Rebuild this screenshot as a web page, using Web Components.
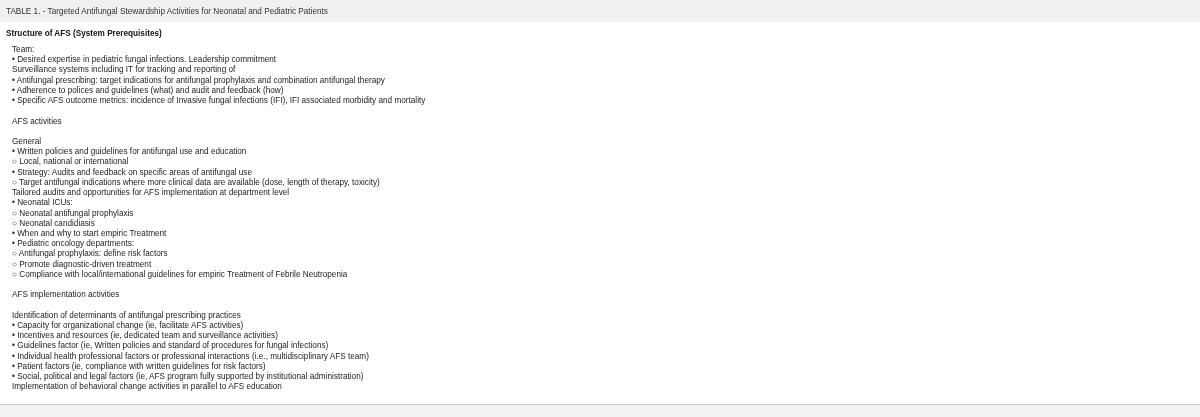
<!DOCTYPE html>
<html>
<head>
<meta charset="utf-8">
<title>Table 1</title>
<style>
  html, body { margin: 0; padding: 0; background: #fff; }
  body { font-family: "Liberation Sans", Arial, sans-serif; }
</style>
</head>
<body>
<table-page>
  <span slot="caption">TABLE 1. - Targeted Antifungal Stewardship Activities for Neonatal and Pediatric Patients</span>
  <span slot="heading">Structure of AFS (System Prerequisites)</span>
  <t-line>Team:</t-line>
  <t-line>• Desired expertise in pediatric fungal infections. Leadership commitment</t-line>
  <t-line>Surveillance systems including IT for tracking and reporting of</t-line>
  <t-line>• Antifungal prescribing: target indications for antifungal prophylaxis and combination antifungal therapy</t-line>
  <t-line>• Adherence to polices and guidelines (what) and audit and feedback (how)</t-line>
  <t-line>• Specific AFS outcome metrics: incidence of Invasive fungal infections (IFI), IFI associated morbidity and mortality</t-line>
  <t-line></t-line>
  <t-line>AFS activities</t-line>
  <t-line></t-line>
  <t-line>General</t-line>
  <t-line>• Written policies and guidelines for antifungal use and education</t-line>
  <t-line>○ Local, national or international</t-line>
  <t-line>• Strategy: Audits and feedback on specific areas of antifungal use</t-line>
  <t-line>○ Target antifungal indications where more clinical data are available (dose, length of therapy, toxicity)</t-line>
  <t-line>Tailored audits and opportunities for AFS implementation at department level</t-line>
  <t-line>• Neonatal ICUs:</t-line>
  <t-line>○ Neonatal antifungal prophylaxis</t-line>
  <t-line>○ Neonatal candidiasis</t-line>
  <t-line>• When and why to start empiric Treatment</t-line>
  <t-line>• Pediatric oncology departments:</t-line>
  <t-line>○ Antifungal prophylaxis: define risk factors</t-line>
  <t-line>○ Promote diagnostic-driven treatment</t-line>
  <t-line>○ Compliance with local/international guidelines for empiric Treatment of Febrile Neutropenia</t-line>
  <t-line></t-line>
  <t-line>AFS implementation activities</t-line>
  <t-line></t-line>
  <t-line>Identification of determinants of antifungal prescribing practices</t-line>
  <t-line>• Capacity for organizational change (ie, facilitate AFS activities)</t-line>
  <t-line>• Incentives and resources (ie, dedicated team and surveillance activities)</t-line>
  <t-line>• Guidelines factor (ie, Written policies and standard of procedures for fungal infections)</t-line>
  <t-line>• Individual health professional factors or professional interactions (i.e., multidisciplinary AFS team)</t-line>
  <t-line>• Patient factors (ie, compliance with written guidelines for risk factors)</t-line>
  <t-line>• Social, political and legal factors (ie, AFS program fully supported by institutional administration)</t-line>
  <t-line>Implementation of behavioral change activities in parallel to AFS education</t-line>
</table-page>
<script>
class TablePage extends HTMLElement {
  constructor() {
    super();
    this.attachShadow({ mode: 'open' });
    this.shadowRoot.innerHTML = `
      <style>
        :host {
          display: flex;
          flex-direction: column;
          height: 417px;
          overflow: hidden;
          font-family: "Liberation Sans", Arial, sans-serif;
          font-size: 8.2px;
          color: #222;
        }
        .caption {
          height: 22px;
          line-height: 23px;
          padding-left: 6px;
          background: #f0f0f0;
          color: #333;
        }
        .heading {
          margin: 7px 0 0 6px;
          height: 10px;
          line-height: 10px;
          font-weight: bold;
          color: #111;
        }
        .body {
          flex: 1;
          padding: 6px 0 0 12px;
        }
        .caption slot, .heading slot, .body slot {
          display: block;
          filter: blur(0.25px);
        }
        .footer {
          height: 12px;
          background: #f3f3f3;
          border-top: 1px solid #c4c4c4;
        }
      </style>
      <div class="caption"><slot name="caption"></slot></div>
      <div class="heading"><slot name="heading"></slot></div>
      <div class="body"><slot></slot></div>
      <div class="footer"></div>
    `;
  }
}

class TLine extends HTMLElement {
  constructor() {
    super();
    this.attachShadow({ mode: 'open' });
    this.shadowRoot.innerHTML = `
      <style>
        :host { display: block; height: 10.22px; line-height: 10px; white-space: nowrap; }
      </style>
      <slot></slot>
    `;
  }
}

customElements.define('table-page', TablePage);
customElements.define('t-line', TLine);
</script>
</body>
</html>
